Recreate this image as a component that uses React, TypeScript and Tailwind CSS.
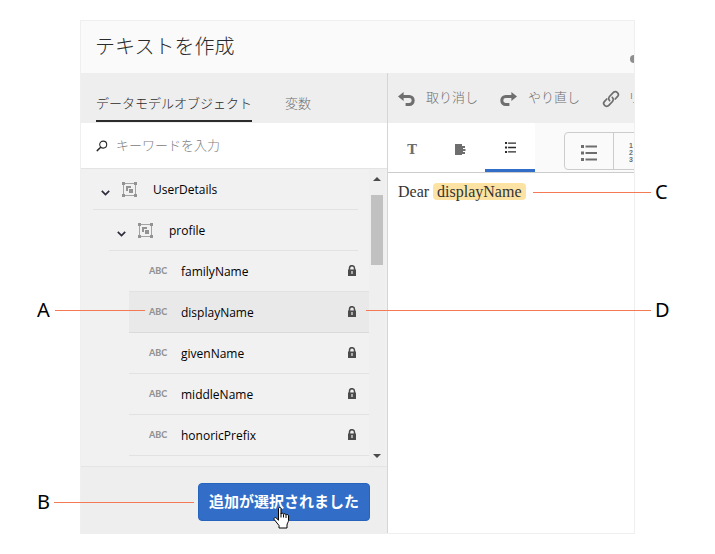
import React, { useState } from 'react';

const leafFields = ['familyName', 'displayName', 'givenName', 'middleName', 'honoricPrefix'];

const SearchIcon = () => (
    <svg width="12" height="12" viewBox="0 0 12 12" fill="none" stroke="#2b2b2b" strokeWidth="1.1" strokeLinecap="round">
        <circle cx="7.2" cy="4.6" r="3.5" />
        <path d="M4.7 7.2 1.2 10.6" strokeWidth="1.5" />
    </svg>
);

const UndoIcon = ({ className = '' }: { className?: string }) => (
    <svg width="17" height="15" viewBox="0 0 17 15" className={className}>
        <path d="M0 4.5 5.6 0v9z" fill="#6e6e6e" />
        <path d="M4.5 4.5h6.8a3.9 3.9 0 0 1 3.9 3.9v.2a3.9 3.9 0 0 1-3.9 3.9H7.6" fill="none" stroke="#6e6e6e" strokeWidth="3" />
    </svg>
);

const LinkIcon = ({ className = '' }: { className?: string }) => (
    <svg width="18" height="18" viewBox="0 0 18 18" fill="none" stroke="#6e6e6e" strokeWidth="1.7" strokeLinecap="round" className={className}>
        <path d="M7.6 10.6a2.9 2.9 0 0 1-.1-4.1l3.7-3.9a2.9 2.9 0 0 1 4.2 0 2.9 2.9 0 0 1 0 4.1l-2.2 2.3" />
        <path d="M10.3 7.4a2.9 2.9 0 0 1 .2 4.1l-3.7 3.9a2.9 2.9 0 0 1-4.2 0 2.9 2.9 0 0 1 0-4.1L4.8 9" />
    </svg>
);

const FragmentIcon = () => (
    <svg width="11" height="11" viewBox="0 0 11 11" fill="#6e6e6e">
        <path d="M0 0h7v2h3v2H8v1h2.500v2H8v1h2v2H7v1H0z" />
    </svg>
);

const ListIcon = ({ size = 12, color = '#2b2b2b' }: { size?: number; color?: string }) => (
    <svg width={size} height={size} viewBox="0 0 16 16" fill={color}>
        <path d="M0 0h3v3H0zM0 6.500h3v3H0zM0 13h3v3H0zM4.500.6h11.500v2H4.500zM4.500 7h11.500v2H4.500zM4.500 13.400h11.500v2H4.500z" />
    </svg>
);

const GroupIcon = () => (
    <svg width="15" height="15" viewBox="0 0 15 15">
        <path d="M1.500 1.500h12v12h-12z" fill="none" stroke="#a3a3a3" />
        <path d="M0 0h3v3H0zM12 0h3v3h-3zM0 12h3v3H0zM12 12h3v3h-3z" fill="#939393" />
        <path d="M4 4h5v2H6v3H4z" fill="#939393" />
        <path d="M7 7h4v4H7z" fill="#939393" />
    </svg>
);

const ChevronIcon = () => (
    <svg width="9" height="6" viewBox="0 0 9 6" fill="none" stroke="#2b2b3b" strokeWidth="1.7">
        <path d="M.8.9 4.500 4.500 8.200.9" />
    </svg>
);

const LockIcon = () => (
    <svg width="10" height="11" viewBox="0 0 10 11">
        <path d="M2.500 5V3.200a2.500 2.500 0 0 1 5 0V5" fill="none" stroke="#4b4b4b" strokeWidth="1.500" />
        <path d="M1 4.500h8V11H1z" fill="#4b4b4b" />
        <path d="M4.300 6h1.400v3H4.300z" fill="#d8d8d8" />
    </svg>
);

const HandCursor = () => (
    <svg width="17" height="22" viewBox="0 0 17 22" className="absolute left-[273px] top-[507px] pointer-events-none">
        <path
            d="M5.500 1.500c0-1.300 2.500-1.300 2.500 0V7c.3-1.200 2.500-1 2.500.4.400-1.100 2.500-.8 2.500.5.500-.9 2.500-.5 2.500 1v4.600c0 1.500-1.500 3-1.500 4.500v3H6v-2.500L1.200 12.500c-.8-1.300.8-2.700 2-1.500l2.300 2.200z"
            fill="#fff"
            stroke="#000"
        />
        <path d="M8 6.500v4M10.500 7.500v3M13 8v3" stroke="#000" />
    </svg>
);

interface TreeBranchProps {
    label: string;
    className: string;
}

const TreeBranch: React.FC<TreeBranchProps> = ({ label, className }) => (
    <button className={`flex items-center h-[41px] border-b border-[#e2e2e2] pl-2 text-left ${className}`}>
        <span className="pt-2"><ChevronIcon /></span>
        <span className="ml-3"><GroupIcon /></span>
        <span className="ml-4 pt-0.5">{label}</span>
    </button>
);

const App: React.FC = () => {
    const [selected, setSelected] = useState('displayName');
    const [keyword, setKeyword] = useState('');

    return (
        <div className="relative px-20 py-5 bg-white text-[13px] text-black font-['Noto_Sans','Noto_Sans_CJK_JP',sans-serif]">
            <main className="border border-[#efefef] overflow-hidden">
                {/* Header */}
                <header className="flex items-center justify-between h-[52px] pl-3.5 bg-[#fafafa]">
                    <h1 className="pb-0.5 text-[20px] font-light text-[#2b2b2b] font-['Noto_Sans_CJK_JP',sans-serif]">テキストを作成</h1>
                    <span className="w-2 h-2 rounded-full bg-[#8e8e8e] -mr-1 mt-6"></span>
                </header>

                <div className="flex">
                    {/* Data sources */}
                    <section className="flex flex-col w-[307px] shrink-0 bg-[#eee] border-r border-[#d5d5d5]">
                        <nav className="flex items-end h-[50px] pl-[15px] gap-[33px] font-light font-['Noto_Sans_CJK_JP',sans-serif]">
                            <button className="h-8 pb-1 mb-px border-b-2 border-[#2b2b2b] text-[#2b2b2b]">データモデルオブジェクト</button>
                            <button className="h-8 pb-1 mb-px border-b-2 border-transparent text-[#6e6e6e]">変数</button>
                        </nav>
                        <label className="flex items-center gap-2 h-[45px] pl-[15px] bg-white">
                            <SearchIcon />
                            <input
                                type="text"
                                aria-label="キーワードを入力"
                                placeholder="キーワードを入力"
                                value={keyword}
                                onChange={(e) => setKeyword(e.target.value)}
                                className="flex-1 min-w-0 pb-0.5 outline-none font-light placeholder:text-[#808080] font-['Noto_Sans_CJK_JP',sans-serif]"
                            />
                        </label>

                        <div className="flex border-y border-[#e4e4e4] bg-[#f1f1f1]">
                            <div className="flex flex-col flex-1 min-w-0 pb-2.5 font-['Open_Sans','Noto_Sans',sans-serif] text-[12px]">
                                <TreeBranch label="UserDetails" className="ml-3 mr-[11px]" />
                                <TreeBranch label="profile" className="ml-7 mr-[11px]" />
                                {leafFields.map((name) => (
                                    <button
                                        key={name}
                                        onClick={() => setSelected(name)}
                                        className={`flex items-center h-[41px] ml-12 pl-5 pr-3 border-b text-left ${
                                            selected === name ? 'bg-[#e9e9e9] border-[#dadada]' : 'border-[#e2e2e2]'
                                        }`}
                                    >
                                        <span className="w-8 text-[9px] font-black text-[#939393] font-['Lato',sans-serif]">ABC</span>
                                        <span className="flex-1 pt-0.5">{name}</span>
                                        <span className="pb-0.5"><LockIcon /></span>
                                    </button>
                                ))}
                            </div>
                            {/* Scrollbar */}
                            <div className="flex flex-col items-center justify-between w-4 mr-0.5 py-2 bg-[#efefef]">
                                <div className="flex flex-col items-center gap-3.5">
                                    <svg width="8" height="4" viewBox="0 0 8 4"><path d="M4 0 8 4H0z" fill="#4b4b4b" /></svg>
                                    <span className="w-3 h-[70px] bg-[#c1c1c1]"></span>
                                </div>
                                <svg width="8" height="4" viewBox="0 0 8 4"><path d="M0 0h8L4 4z" fill="#4b4b4b" /></svg>
                            </div>
                        </div>

                        <footer className="flex justify-end pl-4 pr-[17px] pt-4 pb-3">
                            <button className="h-[38px] px-2.5 pb-0.5 rounded border border-[#2663bd] bg-[#326ec8] text-[15px] font-bold text-white font-['Noto_Sans_CJK_JP',sans-serif]">
                                追加が選択されました
                            </button>
                        </footer>
                    </section>

                    {/* Letter editor */}
                    <section className="flex flex-col flex-1 min-w-0 overflow-hidden">
                        <div className="flex items-center h-[50px] shrink-0 pl-[10px] gap-[22px] bg-[#eee] font-light text-[#6e6e6e] whitespace-nowrap font-['Noto_Sans_CJK_JP',sans-serif]">
                            <button className="flex items-center gap-[11px] pb-0.5"><UndoIcon className="mt-1" />取り消し</button>
                            <button className="flex items-center gap-[11px] pb-0.5"><UndoIcon className="mt-1 -scale-x-100" />やり直し</button>
                            <button className="flex items-center gap-2 pb-0.5"><LinkIcon className="mt-1" />リンク</button>
                        </div>
                        <div className="flex h-[50px] shrink-0 bg-[#fafafa] border-b border-[#ccc]">
                            <div className="flex bg-white">
                                <button className="w-12 pt-1 font-['DejaVu_Serif',serif] text-[13px] font-bold text-[#6e6e6e]">T</button>
                                <button className="w-[49px] pt-1 flex items-center justify-center"><FragmentIcon /></button>
                                <button className="w-[50px] pt-0.5 flex items-center justify-center border-b-3 border-[#326ec8]"><ListIcon size={11} /></button>
                            </div>
                            <svg width="5" height="10" viewBox="0 0 5 10" className="self-center"><path d="M0 0 5 5 0 10z" fill="#fff" /></svg>
                            <div className="flex self-end h-[38px] mb-0.5 ml-[29px] shrink-0 border border-[#ccc] rounded">
                                <button className="w-12 pt-1 flex items-center justify-center"><ListIcon size={16} color="#6e6e6e" /></button>
                                <button className="w-12 border-l border-[#ccc] pl-[15px] pt-0.5 text-left text-[7px] leading-[7px] font-bold text-[#6e6e6e] font-['Liberation_Sans',sans-serif]">
                                    1<br />2<br />3
                                </button>
                            </div>
                        </div>
                        <div className="flex-1 px-2.5 pt-[7px] bg-white font-['Liberation_Serif',serif] text-[16px] text-[#333]">
                            Dear <span className="px-1 rounded bg-[#fde3a3]">displayName</span>
                        </div>
                    </section>
                </div>
            </main>

            {/* Callouts */}
            <div className="absolute left-[37px] top-[298px] flex items-center h-6 gap-[5px] text-[20px]">
                A<span className="w-[90px] h-px bg-[#f47a55]"></span>
            </div>
            <div className="absolute left-[37px] top-[490px] flex items-center h-6 gap-1 text-[20px]">
                B<span className="w-[140px] h-px bg-[#f47a55]"></span>
            </div>
            <div className="absolute left-[533px] top-[180px] flex items-center h-6 gap-1 text-[20px]">
                <span className="w-[118px] h-px bg-[#f47a55]"></span>C
            </div>
            <div className="absolute left-[366px] top-[298px] flex items-center h-6 gap-1 text-[20px]">
                <span className="w-[285px] h-px bg-[#f47a55]"></span>D
            </div>
            <HandCursor />
        </div>
    );
};

export default App;
